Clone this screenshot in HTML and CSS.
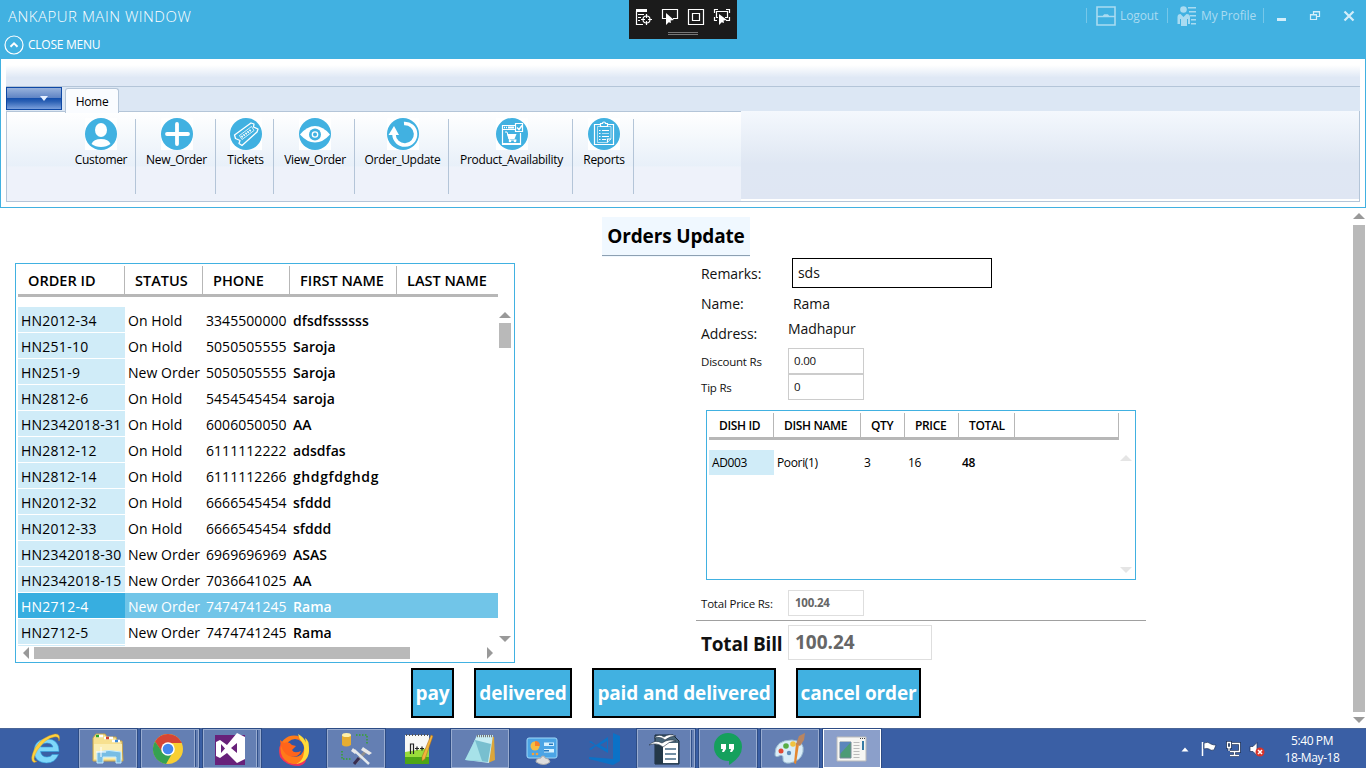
FILE: index.html
```html
<!DOCTYPE html>
<html lang="en">
<head>
<meta charset="utf-8">
<title>Ankapur Main Window</title>
<link rel="stylesheet" href="styles.css">
</head>
<body>
<header class="titlebar">
  <div class="title-row">
    <span class="app-title">ANKAPUR MAIN WINDOW</span>
    <div class="win-commands">
      <span class="cmd cmd-logout"><svg width="20" height="20" viewBox="0 0 20 20"><path d="M1 1h18v18H1zM1 10.500h18M7.500 10l1-1h3l1 1" fill="none" stroke="currentColor" stroke-width="1.600"/></svg><span>Logout</span></span>
      <span class="cmd cmd-profile"><svg width="20" height="20" viewBox="0 0 20 20" fill="currentColor"><circle cx="6.500" cy="3.500" r="3.300"/><path d="M.5 18v-7q0-3 3-3l3 3 3-3q3.500 0 3.500 3v7h-2v-5H10v7H4v-7h-1v5zM11 1h8v1.500h-8zm1 4h7v1.500h-7zm1 4h6v1.500h-6zm1 4h5v1.500h-5zm0 4h5v1.500h-5z"/></svg><span>My Profile</span></span>
      <span class="cmd-end"></span>
      <svg class="win-buttons" width="84" height="20" viewBox="0 0 84 20"><path d="M13 12h9v3h-9z" fill="#d3eefa"/><path d="M46.500 8.500h6v5h-6zM49.500 8V5.500h6v5H53M46 9h7M49 6h7" fill="none" stroke="#d3eefa" stroke-width="1.200"/><path d="M80.500 5.500l9 9m0-9l-9 9" fill="none" stroke="#d3eefa" stroke-width="2.200"/></svg>
    </div>
  </div>
  <div class="menu-row">
    <svg width="20" height="20" viewBox="0 0 20 20"><circle cx="10" cy="10" r="9" fill="none" stroke="#fff" stroke-width="1.200"/><path d="M6.500 11.800L10 8.300l3.500 3.500" fill="none" stroke="#fff" stroke-width="2"/></svg>
    <span class="close-menu">CLOSE MENU</span>
  </div>
  <div class="debug-tools">
    <svg width="108" height="39" viewBox="0 0 108 39" fill="none" stroke="#fff" stroke-width="1.200">
      <path d="M7 9h11v3H7z" fill="#fff" stroke="none"/><path d="M7.500 11v13.500H14M9 14.500h6M9 17.500h3M9 20.500h2"/><circle cx="17.500" cy="19.500" r="3.500"/><path d="M17.500 14v4m0 3v4M12 19.500h4m3 0h4"/>
      <path d="M37 18.500h-3.500v-9h15v9H44"/><path d="M37 13v12l3-3 1 1 1-.5-.5-2 3.500-.5z" fill="#fff" stroke="none"/>
      <path d="M59.500 9.500h15v15h-15zM63.500 13.500h7v7h-7z"/>
      <path d="M85.500 13V9.500H89M97 9.500h3.500V13M100.500 17v3.500H97M85.500 17v3.500H88M89 17.500h-1.500v-6h11v6H96"/><path d="M90 14v11l3-3 1 1 1-.5-.5-2 3.500-.5z" fill="#fff" stroke="none"/>
      <path d="M39 32.500h30M39 34.500h30" stroke="#777" stroke-width="1"/>
    </svg>
  </div>
</header>

<section class="ribbon">
  <div class="quick-bar"></div>
  <div class="tab-row"><button class="app-button" aria-label="Menu"><span class="tri"></span></button><span class="tab">Home</span></div>
  <div class="ribbon-body">
    <div class="groups">
      <div class="group g1"><svg width="32" height="32" viewBox="0 0 32 32"><path fill="#fff" d="M0 0h32v32H0z"/><circle cx="16" cy="16" r="16" fill="#41b1e1"/><g fill="#fff"><ellipse cx="16" cy="12" rx="6" ry="7"/><path d="M6.500 26q2-5 9.500-5t9.500 5q-4 3-9.500 3t-9.500-3z"/></g></svg><span>Customer</span></div>
      <div class="group g2"><svg width="32" height="32" viewBox="0 0 32 32"><path fill="#fff" d="M0 0h32v32H0z"/><circle cx="16" cy="16" r="16" fill="#41b1e1"/><path d="M16 6v20M6 16h21" stroke="#fff" stroke-width="3.800" stroke-linecap="round"/></svg><span>New_Order</span></div>
      <div class="group g3"><svg width="32" height="32" viewBox="0 0 32 32"><path fill="#fff" d="M0 0h32v32H0z"/><circle cx="16" cy="16" r="16" fill="#41b1e1"/><g fill="none" stroke="#fff" stroke-width="1.300" stroke-linejoin="round"><path d="M4.500 17L21 5l3 1-.5 3 4.500 2-1 3L12 27.500l-3-2 1-3-4.500-2z"/><path d="M9.500 17.500L21.500 8.500l2.500 4-12 9z" stroke-width=".8"/><path d="M11.500 19l10-7.500" stroke-dasharray="1.500 1" stroke-width="2"/></g></svg><span>Tickets</span></div>
      <div class="group g4"><svg width="32" height="32" viewBox="0 0 32 32"><path fill="#fff" d="M0 0h32v32H0z"/><circle cx="16" cy="16" r="16" fill="#41b1e1"/><path d="M1 16.500Q8 8 16 8t15 8.500Q24 24.500 16 24.500T1 16.500z" fill="#fff"/><circle cx="16" cy="16.500" r="6" fill="#41b1e1"/><circle cx="16" cy="16.500" r="3.300" fill="#fff"/><circle cx="16" cy="16.500" r="2" fill="#41b1e1"/></svg><span>View_Order</span></div>
      <div class="group g5"><svg width="32" height="32" viewBox="0 0 32 32"><path fill="#fff" d="M0 0h32v32H0z"/><circle cx="16" cy="16" r="16" fill="#41b1e1"/><path d="M17 5.500a10.800 10.800 0 1 1-10 11" fill="none" stroke="#fff" stroke-width="3.500"/><path d="M1.500 17L7 8l5 9z" fill="#fff"/></svg><span>Order_Update</span></div>
      <div class="group g6"><svg width="32" height="32" viewBox="0 0 32 32"><path fill="#fff" d="M0 0h32v32H0z"/><circle cx="16" cy="16" r="16" fill="#41b1e1"/><g fill="none" stroke="#fff"><path d="M19 7.500H6.500v19h18V15M7 11.500h12" stroke-width="1.200"/><path d="M7 26h18" stroke-width="2"/><path d="M8 9.500h3" stroke-width="1.500" stroke-dasharray="1 1"/><path d="M12 9.500h6" stroke-width="2"/><path d="M19.500 5.500h7v8h-7z" stroke-width="1.200"/><path d="M21 9.500l2 2 3-4" stroke-width="1.500"/><path d="M9 14h2l2.500 8h7"/></g><path d="M11 16h9.500l-2 5h-6z" fill="#fff"/><circle cx="14" cy="23" r="1.300" fill="#fff"/><circle cx="19" cy="23" r="1.300" fill="#fff"/></svg><span>Product_Availability</span></div>
      <div class="group g7"><svg width="32" height="32" viewBox="0 0 32 32"><path fill="#fff" d="M0 0h32v32H0z"/><circle cx="16" cy="16" r="16" fill="#41b1e1"/><g fill="none" stroke="#fff" stroke-width="1.200"><path d="M6.500 6.500h19v20h-19z"/><path d="M9.500 8.500H23V21l-3.500 3.500h-10z" stroke-width=".6"/><path d="M19.500 24.500V21H23"/><path d="M12.500 8.500v-3h2a1.500 1.500 0 0 1 3 0h2v3z" fill="#41b1e1"/><path d="M11 12.500h1.500M14 12.500h7M11 15.500h1.500M11 18.500h1.500M14 18.500h7M11 21.500h1.500M14 21.500h4"/><path d="M14 15.500h7" stroke-width=".6"/></g></svg><span>Reports</span></div>
    </div>
    <div class="ribbon-rest"></div>
  </div>
</section>

<main class="workspace">
  <div class="page">
    <h1 class="page-title">Orders Update</h1>
    <div class="columns">
      <section class="orders">
        <div class="o-row o-head"><span><b>ORDER ID</b></span><span><b>STATUS</b></span><span><b>PHONE</b></span><span><b>FIRST NAME</b></span><span><b>LAST NAME</b></span></div>
        <div class="o-mid">
          <div class="o-body">
            <div class="o-row"><span>HN2012-34</span><span>On Hold</span><span>3345500000</span><b>dfsdfssssss</b></div>
            <div class="o-row"><span>HN251-10</span><span>On Hold</span><span>5050505555</span><b>Saroja</b></div>
            <div class="o-row"><span>HN251-9</span><span>New Order</span><span>5050505555</span><b>Saroja</b></div>
            <div class="o-row"><span>HN2812-6</span><span>On Hold</span><span>5454545454</span><b>saroja</b></div>
            <div class="o-row"><span>HN2342018-31</span><span>On Hold</span><span>6006050050</span><b>AA</b></div>
            <div class="o-row"><span>HN2812-12</span><span>On Hold</span><span>6111112222</span><b>adsdfas</b></div>
            <div class="o-row"><span>HN2812-14</span><span>On Hold</span><span>6111112266</span><b class="wide">ghdgfdghdg</b></div>
            <div class="o-row"><span>HN2012-32</span><span>On Hold</span><span>6666545454</span><b>sfddd</b></div>
            <div class="o-row"><span>HN2012-33</span><span>On Hold</span><span>6666545454</span><b>sfddd</b></div>
            <div class="o-row"><span>HN2342018-30</span><span>New Order</span><span>6969696969</span><b>ASAS</b></div>
            <div class="o-row"><span>HN2342018-15</span><span>New Order</span><span>7036641025</span><b>AA</b></div>
            <div class="o-row selected"><span>HN2712-4</span><span>New Order</span><span>7474741245</span><b>Rama</b></div>
            <div class="o-row"><span>HN2712-5</span><span>New Order</span><span>7474741245</span><b>Rama</b></div>
            <div class="o-row"><span></span></div>
          </div>
          <div class="vscroll"><i class="up"></i><i class="thumb"></i><i class="down"></i></div>
        </div>
        <div class="hscroll"><i class="left"></i><i class="hthumb"></i><i class="right"></i></div>
      </section>

      <section class="details">
        <div class="field"><label>Remarks:</label><span class="remarks-box">sds</span></div>
        <div class="field"><label>Name:</label><span class="name">Rama</span></div>
        <div class="field"><label>Address:</label><span class="address">Madhapur</span></div>
        <div class="field small"><label>Discount Rs</label><span class="box">0.00</span></div>
        <div class="field small"><label>Tip Rs</label><span class="box">0</span></div>
        <div class="dishes">
          <div class="d-row d-head"><span><b>DISH ID</b></span><span><b>DISH NAME</b></span><span><b>QTY</b></span><span><b>PRICE</b></span><span><b>TOTAL</b></span><span></span></div>
          <div class="d-mid">
            <div class="d-row d-data"><span>AD003</span><span>Poori(1)</span><span>3</span><span>16</span><b>48</b></div>
            <div class="vscroll pale"><i class="up"></i><i class="down"></i></div>
          </div>
        </div>
        <div class="field small price"><label>Total Price Rs:</label><span class="box dim">100.24</span></div>
        <div class="field bill"><label>Total Bill</label><span class="box big">100.24</span></div>
      </section>
    </div>
    <div class="actions">
      <button class="pay">pay</button><button class="delivered">delivered</button><button class="paid">paid and delivered</button><button class="cancel">cancel order</button>
    </div>
  </div>
  <div class="page-scroll"><i class="up"></i><i class="track"></i><i class="down"></i></div>
</main>

<footer class="taskbar">
  <div class="apps">
    <span class="app"><svg width="34" height="34" viewBox="0 0 34 34"><path d="M30 19.500H11.500q1 5.500 6.500 5.500 4 0 5-2.500h6.500Q26 31 17.500 31 5 30.500 5 18.500 6 7 18 7q12 0 12 12.500zM11.500 15H24q-1-4-6-4t-6.500 4z" fill="#7fd8fa" stroke="#2f9edc" stroke-width=".6"/><path d="M5 30.500Q0 28 6 16 14 4 26 2q6-.5 4 7 0-5-5-4Q17 6 8.500 18 2 29 8 29.500z" fill="#ffd23e" stroke="#d89a18" stroke-width=".4"/></svg></span>
    <span class="app open"><svg width="34" height="34" viewBox="0 0 34 34"><path d="M2 6l3-4h9l2 3h9l1 4h5l1 20H2z" fill="#f7e08f" stroke="#c9a548"/><path d="M5 4h7M13 6h9M21 9h8" stroke="#fff" stroke-width="2.500"/><path d="M5 4h3" stroke="#2ba52b" stroke-width="2.500"/><path d="M15 6h3" stroke="#d7422f" stroke-width="2.500"/><path d="M24 9h3" stroke="#3f8ad8" stroke-width="2.500"/><path d="M3 12h28v15H3z" fill="#fbeeb4"/><path d="M6 31V20q12-3 24 0v11h-5v-6H12v6z" fill="#78bde4" stroke="#c5ecff"/><path d="M10 15v10m-5-5h10" stroke="#fff"/></svg></span>
    <span class="app open multi"><svg width="32" height="32" viewBox="0 0 32 32"><circle cx="16" cy="16" r="15" fill="#f9cf33"/><path d="M3 8.500A15 15 0 0 1 29 8.500L30 10H16l-6 9z" fill="#d64535"/><path d="M3 8.500A15 15 0 0 0 14 31l7-12-10 1z" fill="#35a151"/><circle cx="16" cy="16" r="6.800" fill="#fff"/><circle cx="16" cy="16" r="5.300" fill="#4587ee"/></svg></span>
    <span class="app open multi"><svg width="32" height="34" viewBox="0 0 32 34"><path d="M1 3h30v30H1z" fill="#68217a"/><path fill-rule="evenodd" d="M23 1l8 4v22l-8 4-10-10-7 5-4-2V10l4-2 7 5zM23 11l-6 5 6 5zM7 12v9l4-4.500z" fill="#fff"/></svg></span>
    <span class="app"><svg width="34" height="34" viewBox="0 0 34 34"><circle cx="17" cy="18" r="14.500" fill="#ff7a1a"/><path d="M4 11Q1 25 12 31q11 4 17-6 1 7-7 9-13 0-19-9-2-8 1-14z" fill="#f2325b"/><circle cx="18" cy="16" r="9" fill="#3156a5"/><path d="M3 8l4 3q5-2 8 2l4 1-4 4q2 4 9 1-3 8-12 5Q4 20 3 8z" fill="#ff641b"/><path d="M21 2q1 5 4 8 4 5 1 15-2 5-7 7 14-2 13-16Q32 8 28 6l1 5q-2-6-8-9z" fill="#ffdb38"/></svg></span>
    <span class="app open"><svg width="36" height="34" viewBox="0 0 36 34"><path d="M4 3v10q4 3 9 0V3z" fill="#e5ad31"/><ellipse cx="8.500" cy="3" rx="4.500" ry="2" fill="#fff0a8"/><path d="M18 3h11v10M4 19v8h10" fill="none" stroke="#35a42c" stroke-width="1.500" stroke-dasharray="1.500 1.500"/><path d="M29 18L17 31" stroke="#8e8e8e" stroke-width="3"/><path d="M16 18l15 14" stroke="#e3e8ed" stroke-width="2.500"/><path d="M15 16l4 4-2 2-4-3zM25 15l9 6-3 2-8-5z" fill="#e8e8e8"/><path d="M16 32l5-6" stroke="#382d50" stroke-width="3"/></svg></span>
    <span class="app"><svg width="32" height="34" viewBox="0 0 32 34"><path d="M3 3h24v29H3z" fill="#f8f8f5"/><path d="M3 20l24-4v16H3z" fill="#9adc3a"/><path d="M3 25h24v7H3z" fill="#4ea616"/><path d="M4 3h22" stroke="#555" stroke-dasharray="1 2" stroke-width="2"/><path d="M8.500 22V12h3v10M13 16.500h4m-2-2v4M18 16.500h4m-2-2v4" fill="none" stroke="#222" stroke-width="1.200"/><path d="M29 3l2 1-8 23-3 2v-4z" fill="#f2b43c" stroke="#a8691c" stroke-width=".5"/></svg></span>
    <span class="app open"><svg width="34" height="34" viewBox="0 0 34 34"><path d="M27 4l4 1 1 23-7 3z" fill="#dba63a"/><path d="M14 3h16l-4 28-23-3z" fill="#c8eef4"/><path d="M2 28L12 8l16 4-3 18z" fill="#78bfcf"/><path d="M2 28L12 8l7 21z" fill="#a7e2e9"/><path d="M14 4h16" stroke="#777" stroke-width="2.500" stroke-dasharray="1 1"/></svg></span>
    <span class="app"><svg width="34" height="34" viewBox="0 0 34 34"><rect x="2" y="6" width="30" height="20" rx="2" fill="#4ba4e5" stroke="#a1dafa"/><circle cx="10" cy="14" r="4.500" fill="#f7bc43"/><path d="M10 14V9q5 0 5 5z" fill="#f6802c"/><path d="M19 10.500h10v3.500H19zM19 17h10v3.500H19z" fill="#d6f1ff"/><path d="M24 11.500h4V13h-4zM19 18h5v1.500h-5z" fill="#2477bc"/><circle cx="8" cy="22" r="1.300" fill="#f5a037"/><circle cx="12" cy="22" r="1.300" fill="#f5a037"/><path d="M11 30q0-4 5-4 0-2 2-2t2 2q4 0 5 4-6 5-14 0z" fill="#ddd" stroke="#aaa"/></svg></span>
    <span class="app"><svg width="34" height="34" viewBox="0 0 34 34"><path d="M26 1l7 3v25l-7 4-24-6v-2l24 2zM4 9l5 4L21 5v16l-12-7-5 4-2-1 6-4-6-3zM20 9l-7 4 7 4z" fill="#0b72c7" fill-rule="evenodd"/></svg></span>
    <span class="app open multi"><svg width="34" height="34" viewBox="0 0 34 34"><path d="M8 3h18l6 6v23H8z" fill="#496578" stroke="#162838"/><path d="M8 12h8v20H8z" fill="#243848"/><path d="M16 11h15v20H16z" fill="#fff"/><path d="M18 17h11M18 22h11M18 27h11" stroke="#456b86" stroke-width="1.500"/><path d="M7 6q5-5 10-1 5-4 12-1-6 0-11 4-4-4-11-2zM2 13q6-6 13-2 7-5 14-2-7 0-13 6-6-5-14-2z" fill="#fff" stroke="#234" stroke-width=".6"/></svg></span>
    <span class="app open"><svg width="32" height="34" viewBox="0 0 32 34"><path d="M16 1a14 14 0 0 1 14 14q0 10-13 18v-4h-1a14 14 0 0 1 0-28z" fill="#15a05d"/><path d="M9 12h5v5l-2 3h-2l1-3H9zm8 0h5v5l-2 3h-2l1-3h-2z" fill="#fff"/></svg></span>
    <span class="app open"><svg width="36" height="34" viewBox="0 0 36 34"><path d="M3 22Q3 8 20 8q13 1 11 12-2 9-13 11-8 1-7-5 0-4-4-2-4 2-4-2z" fill="#d9edf8" stroke="#9bbbd0"/><circle cx="9" cy="19" r="2.500" fill="#e24a35"/><circle cx="14" cy="14" r="2.800" fill="#58ad45"/><circle cx="21" cy="12" r="2.800" fill="#f0c33f"/><circle cx="17" cy="21" r="2.200" fill="#608db8"/><path d="M27 12l-3 20-2-1 2-20z" fill="#e4882f"/><path d="M24 12l3-8 6-3-1 7-4 6z" fill="#b98561"/></svg></span>
    <span class="app open active"><svg width="32" height="28" viewBox="0 0 32 28"><path d="M1 2h29v24H1z" fill="#f6f6f3" stroke="#bbb"/><path d="M4 7h11v16H4z" fill="#4c9b75" stroke="#789"/><path d="M4 7h11L4 19z" fill="#5b86bc"/><path d="M17.500 7.500h6M17.500 10.500h6M17.500 13.500h6M17.500 16.500h6M17.500 19.500h6M17.500 22.500h6" stroke="#bbb"/><path d="M26 6h2v9h-2z" fill="#367ba5"/><path d="M24 3.500h6" stroke="#444" stroke-dasharray="1 1"/></svg></span>
  </div>
  <div class="tray">
    <svg width="84" height="20" viewBox="0 0 84 20"><path d="M.5 12.500h7L4 8.500z" fill="#fff"/><path d="M21.500 3v14" stroke="#fff" stroke-width="1.500"/><path d="M23 4q4-2 7 1 2 1 5 1l-2 5q-3 1-5-1-2-1-5 0z" fill="#fff" stroke="#1c3159" stroke-width=".7"/><path d="M51 4.500h7.500v8H49M46.500 3.500h3v5h-3zM48 8.500V12M53.500 13v3M49 16.500h9" fill="none" stroke="#1c3159" stroke-width="3"/><path d="M51 4.500h7.500v8H49M46.500 3.500h3v5h-3zM48 8.500V12M53.500 13v3M49 16.500h9" fill="none" stroke="#fff" stroke-width="1.300"/><path d="M69 7.500h3l4-4v13l-4-4h-3z" fill="#fff" stroke="#1c3159" stroke-width=".7"/><circle cx="79" cy="13" r="4.500" fill="#d8332a"/><path d="M77 11l4 4m0-4l-4 4" stroke="#fff" stroke-width="1.500"/></svg>
    <div class="clock"><span>5:40 PM</span><span>18-May-18</span></div>
  </div>
</footer>
</body>
</html>
```
FILE: styles.css
```css
* { box-sizing: border-box; }
body { margin: 0; width: 1366px; height: 768px; overflow: hidden; display: flex; flex-direction: column; background: #fff; color: #000; font-family: "Open Sans", "Noto Sans", sans-serif; font-size: 14px; white-space: nowrap; }
svg { display: block; flex: none; }
b { font-weight: 600; }

/* title bar */
.titlebar { position: relative; height: 59px; flex: none; background: #41b1e1; color: #fff; }
.title-row { height: 31px; display: flex; justify-content: space-between; align-items: center; padding: 0 8px; }
.app-title { font-size: 15px; font-weight: 300; letter-spacing: .5px; }
.win-commands { display: flex; align-items: center; color: #a9dbf1; font-size: 12px; letter-spacing: -.1px; }
.cmd { display: flex; align-items: center; height: 15px; border-left: 1px solid #76c7e9; }
.cmd-logout { width: 81px; padding-left: 9px; gap: 4px; }
.cmd-profile { width: 96px; padding-left: 9px; gap: 4px; }
.cmd-end { height: 15px; border-left: 1px solid #76c7e9; }
.win-buttons { overflow: visible; margin-right: 10px; }
.menu-row { display: flex; align-items: center; gap: 4px; height: 27px; padding-left: 4px; font-size: 12px; letter-spacing: -.25px; }
.debug-tools { position: absolute; left: 629px; top: 0; width: 108px; height: 39px; background: #1b1b1b; }

/* ribbon */
.ribbon { height: 149px; flex: none; padding: 6px 5px 5px; border: 1px solid #41b1e1; border-top: 0; }
.quick-bar { height: 22px; background: linear-gradient(#fff, #dfe8f5 60%, #dfe8f5); border-bottom: 1px solid #b4c5d8; }
.tab-row { display: flex; height: 24px; background: #dce7f4; gap: 3px; }
.app-button { width: 56px; height: 23px; padding: 0 13px 0 0; border: 1px solid #0e48a5; background: linear-gradient(#98b2dc, #5e83c4 48%, #1650ad 50%, #2d62b5 65%, #7ba0dc); display: flex; align-items: center; justify-content: flex-end; }
.tri { border: 4px solid transparent; border-top: 5px solid #e6efff; border-bottom: 0; }
.tab { width: 54px; height: 25px; margin-top: 1px; padding-top: 1px; border: 1px solid #b4c5d8; border-bottom: 0; border-radius: 3px 3px 0 0; background: #fafcff; display: flex; align-items: center; justify-content: center; font-size: 12px; letter-spacing: -.3px; z-index: 1; }
.ribbon-body { height: 91px; display: flex; border: 1px solid #b4c5d8; border-top: 0; }
.groups { width: 734px; padding: 7px 0 7px 60px; display: flex; border-top: 1px solid #b4c5d8; background: linear-gradient(#fff, #e8f0f9 60%, #eef2fa 62%, #eef2fa); }
.ribbon-rest { flex: 1; height: 88px; background: linear-gradient(#f4f8fd, #dfe7f3 60%, #dfe6f3); }
.group { display: flex; flex-direction: column; align-items: center; border-right: 1px solid #b4c5d8; padding-left: 2px; font-size: 12px; letter-spacing: -.31px; line-height: 20px; }
.group svg { margin-top: -1px; }
.g1 { width: 69px; padding-left: 0; } .g2 { width: 80px; } .g3 { width: 58px; } .g4 { width: 81px; } .g5 { width: 94px; } .g6 { width: 124px; } .g7 { width: 61px; }

/* workspace */
.workspace { height: 520px; flex: none; display: flex; justify-content: space-between; }
.page { width: 1340px; padding-top: 9px; }
.page-title { width: 148px; height: 40px; margin: 0 0 1px 602px; background: linear-gradient(#f0f8ff 38px, #8da0b2 38px 39px, #f0f8ff 39px); display: flex; justify-content: center; font-size: 19px; letter-spacing: -.15px; line-height: 38px; font-weight: 700; }
.columns { display: flex; height: 410px; }

/* orders grid */
.orders { width: 500px; height: 400px; margin: 5px 181px 0 15px; padding: 2px; border: 1px solid #41b1e1; }
.o-row { display: grid; grid-template-columns: 107px 78px 87px 107px 101px; width: 480px; height: 26px; line-height: 25px; letter-spacing: .05px; }
.o-head { height: 31px; border-bottom: 3px solid #b7b7b7; line-height: 29px; font-size: 14.500px; letter-spacing: .02px; }
.o-head span { border-right: 1px solid #b7b7b7; padding-left: 10px; }
.o-head span:last-child { border: 0; }
.o-mid { display: flex; height: 349px; padding-top: 10px; }
.o-body { width: 480px; overflow: hidden; }
.o-body .o-row > * { padding-left: 3px; height: 25px; padding-top: 1px; }
.o-body .o-row > :first-child { background: #d0ecf8; letter-spacing: .25px; }
.o-body .wide { letter-spacing: .6px; }
.o-body .selected { color: #fff; background: linear-gradient(#71c5e8 25px, transparent 25px); }
.o-body .selected > :first-child { background: #37aee0; }
.vscroll { display: flex; flex-direction: column; width: 14px; padding: 5px 1px 4px; }
i { display: block; flex: none; }
.up { border: 6px solid transparent; border-bottom-color: #999; border-top: 0; }
.down { border: 6px solid transparent; border-top-color: #999; border-bottom: 0; margin-top: auto; }
.left { border: 6px solid transparent; border-right-color: #999; border-left: 0; }
.right { border: 6px solid transparent; border-left-color: #999; border-right: 0; margin-left: auto; }
.thumb { height: 25px; margin-top: 5px; background: #b9b9b9; }
.hscroll { display: flex; width: 480px; padding: 1px 5px; }
.hthumb { width: 376px; height: 12px; margin-left: 5px; background: #b9b9b9; }

/* order details */
.details { width: 450px; }
.field { display: grid; grid-template-columns: 91px 1fr; height: 30px; line-height: 31px; padding-left: 5px; color: #111; letter-spacing: -.05px; }
.remarks-box { width: 200px; height: 30px; border: 1px solid #000; padding-left: 5px; line-height: 28px; }
.name { padding-left: 1px; }
.address { margin-left: -4px; line-height: 21px; }
.small { height: 26px; line-height: 27px; font-size: 11.500px; letter-spacing: -.2px; grid-template-columns: 87px 1fr; }
.box { width: 76px; height: 26px; border: 1px solid #ccc; padding-left: 5px; line-height: 24px; }
.dishes { width: 430px; height: 170px; margin: 10px 0 10px 10px; padding: 2px; border: 1px solid #41b1e1; font-size: 12px; letter-spacing: -.35px; }
.d-row { display: grid; grid-template-columns: 65px 87px 44px 54px 56px 104px; width: 410px; }
.d-head { height: 27px; border-bottom: 3px solid #b7b7b7; line-height: 25px; }
.d-head span { border-right: 1px solid #b7b7b7; padding-left: 10px; }
.d-mid { display: flex; height: 139px; padding-top: 10px; }
.d-data { height: 25px; line-height: 25px; }
.d-data > * { padding-left: 3px; }
.d-data > :first-child { background: #d0ecf8; }
.pale { height: 129px; width: 15px; padding: 5px 1px 6px 2px; margin-left: -1px; }
.pale .up { border-bottom-color: #e5e5e5; }
.pale .down { border-top-color: #e5e5e5; }
.dim, .big { border-color: #dedede; color: #666; font-weight: 700; }
.price { height: 31px; border-bottom: 1px solid #a0a0a0; }
.price .box { padding-left: 6px; letter-spacing: -.25px; }
.bill { height: 39px; line-height: 38px; padding-top: 4px; font-size: 19px; letter-spacing: -.2px; font-weight: 700; grid-template-columns: 87px 1fr; }
.big { width: 144px; height: 35px; line-height: 33px; letter-spacing: 0; padding-left: 6px; }

.actions { display: flex; gap: 20px; padding-left: 411px; }
.actions button { height: 50px; padding: 1px 0 0; border: 2px solid #000; background: #41b1e1; color: #fff; font: 700 19px/45px "Open Sans", "Noto Sans", sans-serif; letter-spacing: -.15px; }
.pay { width: 43px; } .delivered { width: 98px; } .paid { width: 184px; } .cancel { width: 125px; }
.page-scroll { display: flex; flex-direction: column; width: 13px; padding: 5px 1px 5px 0; }
.track { width: 12px; height: 487px; margin-top: 6px; background: #b9b9b9; }

/* taskbar */
.taskbar { height: 40px; flex: none; display: flex; justify-content: space-between; background: #3a5fa5; border-top: 1px solid #4a6596; }
.apps { display: flex; gap: 4px; padding-left: 17px; }
.app { width: 58px; height: 39px; display: flex; align-items: center; justify-content: center; }
.open { background: #647fb3; border: 1px solid #99acd0; box-shadow: 0 0 0 1px #2d4c85; }
.multi { padding-right: 5px; background: linear-gradient(90deg, transparent 52px, #99acd0 52px 53px, #30508a 53px 54px, transparent 54px), #647fb3; }
.active { background: #8b9fca; border-color: #fff; }
.tray { display: flex; align-items: center; gap: 14px; width: 185px; color: #fff; }
.clock { width: 66px; display: flex; flex-direction: column; align-items: center; font-size: 12px; letter-spacing: -.4px; line-height: 17px; }
```
